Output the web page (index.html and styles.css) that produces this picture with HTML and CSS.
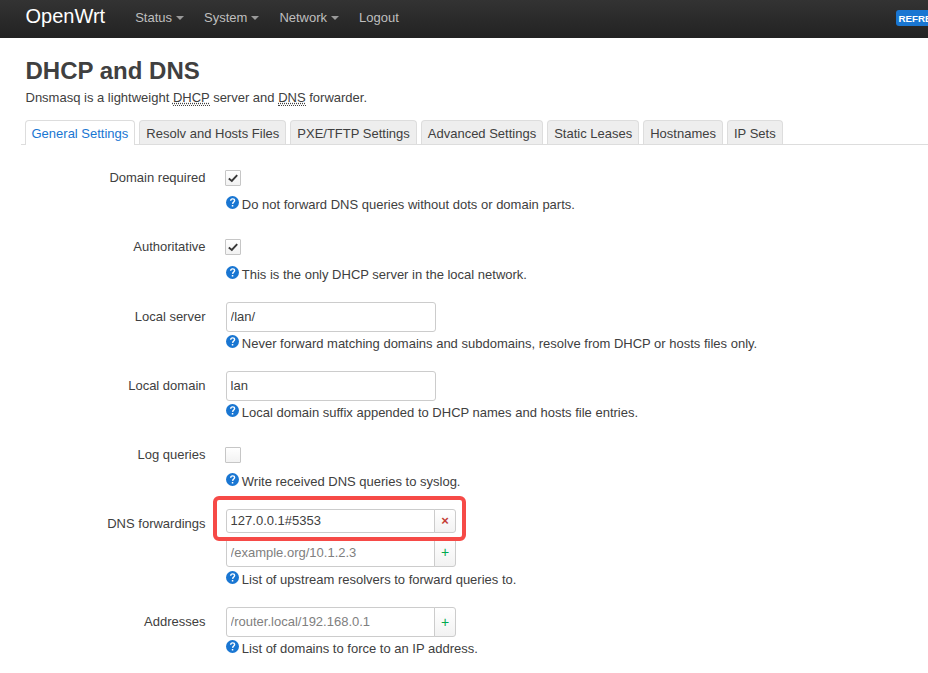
FILE: index.html
```html
<!DOCTYPE html>
<html lang="en">
<head>
<meta charset="utf-8">
<title>OpenWrt - DHCP and DNS</title>
<link rel="stylesheet" href="styles.css">
</head>
<body>
<svg class="defs" width="0" height="0" aria-hidden="true">
  <symbol id="help" viewBox="0 0 13 13"><circle cx="6.5" cy="6.5" r="6.5" fill="#1976d2"/><path d="M4.7 4.7C4.7 2.2 8.6 2.3 8.6 4.6C8.6 6 6.8 6.1 6.6 7.8" fill="none" stroke="#fff" stroke-width="1.4"/><rect x="5.8" y="9" width="1.5" height="1.5" fill="#fff"/></symbol>
  <symbol id="check" viewBox="0 0 10 9"><path d="M.8 4.6L3.8 7L9.2 1.2" fill="none" stroke="#383838" stroke-width="1.9"/></symbol>
</svg>
<header class="topbar">
  <a class="brand">OpenWrt</a>
  <nav class="menu">
    <a class="drop">Status</a>
    <a class="drop">System</a>
    <a class="drop">Network</a>
    <a>Logout</a>
  </nav>
  <span class="badge">REFRESHING</span>
</header>
<main>
  <h2>DHCP and DNS</h2>
  <p class="intro">Dnsmasq is a lightweight <abbr>DHCP</abbr> server and <abbr>DNS</abbr> forwarder.</p>
  <ul class="tabs">
    <li class="active">General Settings</li>
    <li>Resolv and Hosts Files</li>
    <li>PXE/TFTP Settings</li>
    <li>Advanced Settings</li>
    <li>Static Leases</li>
    <li>Hostnames</li>
    <li>IP Sets</li>
  </ul>
  <section class="form">
    <div class="row">
      <label>Domain required</label>
      <div class="field">
        <div class="checkline"><span class="checkbox"><svg width="10" height="9"><use href="#check"/></svg></span></div>
        <div class="help"><svg width="13" height="13"><use href="#help"/></svg><span>Do not forward DNS queries without dots or domain parts.</span></div>
      </div>
    </div>
    <div class="row authoritative">
      <label>Authoritative</label>
      <div class="field">
        <div class="checkline"><span class="checkbox"><svg width="10" height="9"><use href="#check"/></svg></span></div>
        <div class="help"><svg width="13" height="13"><use href="#help"/></svg><span>This is the only DHCP server in the local network.</span></div>
      </div>
    </div>
    <div class="row">
      <label>Local server</label>
      <div class="field">
        <input type="text" value="/lan/">
        <div class="help"><svg width="13" height="13"><use href="#help"/></svg><span>Never forward matching domains and subdomains, resolve from DHCP or hosts files only.</span></div>
      </div>
    </div>
    <div class="row">
      <label>Local domain</label>
      <div class="field">
        <input type="text" value="lan">
        <div class="help"><svg width="13" height="13"><use href="#help"/></svg><span>Local domain suffix appended to DHCP names and hosts file entries.</span></div>
      </div>
    </div>
    <div class="row">
      <label>Log queries</label>
      <div class="field">
        <div class="checkline"><span class="checkbox"></span></div>
        <div class="help"><svg width="13" height="13"><use href="#help"/></svg><span>Write received DNS queries to syslog.</span></div>
      </div>
    </div>
    <div class="row forwardings">
      <label>DNS forwardings</label>
      <div class="field">
        <div class="item"><span class="value">127.0.0.1#5353</span><span class="btn remove">×</span><span class="marker"></span></div>
        <div class="add"><input type="text" placeholder="/example.org/10.1.2.3"><span class="btn">+</span></div>
        <div class="help"><svg width="13" height="13"><use href="#help"/></svg><span>List of upstream resolvers to forward queries to.</span></div>
      </div>
    </div>
    <div class="row">
      <label>Addresses</label>
      <div class="field">
        <div class="add"><input type="text" placeholder="/router.local/192.168.0.1"><span class="btn">+</span></div>
        <div class="help"><svg width="13" height="13"><use href="#help"/></svg><span>List of domains to force to an IP address.</span></div>
      </div>
    </div>
  </section>
</main>
</body>
</html>
```
FILE: styles.css
```css
* { box-sizing: border-box; }
html, body { overflow: hidden; }
body {
  margin: 0;
  height: 673px;
  background: #fff;
  color: #404040;
  font: 13px/18px "Liberation Sans", Arial, sans-serif;
}
.defs { display: block; height: 0; }
.topbar {
  display: flex;
  height: 38px;
  padding-left: 25.5px;
  background: linear-gradient(#333, #222);
  overflow: hidden;
  white-space: nowrap;
}
.brand { width: 109.7px; flex: none; color: #fff; font-size: 20px; line-height: 32px; }
.menu { display: flex; flex: none; width: 760.8px; gap: 20px; color: #bfbfbf; line-height: 35px; }
.drop::after {
  content: "";
  display: inline-block;
  margin-left: 4px;
  vertical-align: 2px;
  border: 4px solid transparent;
  border-top-color: #999;
  border-bottom: 0;
}
.badge {
  flex: none;
  height: 16px;
  margin-top: 10px;
  padding: 1px 2.5px;
  border-radius: 3px;
  background: #1976d2;
  color: #fff;
  font-size: 9.75px;
  font-weight: bold;
  line-height: 16px;
}
main { padding-top: 15px; }
h2 { margin: 0 0 0 25.5px; font-size: 24px; line-height: 36px; }
.intro { margin: 0 0 13px 25.5px; line-height: 18px; }
abbr {
  border-bottom: 1px dotted #404040;
  text-decoration: underline dotted;
}
.tabs {
  display: flex;
  gap: 4px;
  height: 25px;
  margin: 0 0 18px 21px;
  padding: 0 0 0 3.5px;
  border-bottom: 1px solid #ddd;
  list-style: none;
  white-space: nowrap;
}
.tabs li {
  height: 24px;
  padding: 0 6px;
  border: 1px solid #ddd;
  border-bottom: 0;
  border-radius: 4px 4px 0 0;
  background: #eee;
  line-height: 25px;
}
.tabs .active { height: 25px; background: #fff; color: #1976d2; }
.row { display: flex; height: 69px; }
.forwardings { height: 98px; }
.forwardings .help { padding-top: 4px; }
.authoritative { height: 70px; }
.row label { width: 205.5px; margin-right: 20.5px; text-align: right; line-height: 29px; }
.checkline { height: 30px; padding-top: 7px; }
.authoritative .checkline { height: 31px; }
.checkbox {
  display: flex;
  align-items: center;
  justify-content: center;
  width: 16px;
  height: 16px;
  margin-left: -1px;
  border: 1px solid #c6c6c6;
  border-radius: 1px;
  background: linear-gradient(#fff, #f2f2f2);
}
.help { display: flex; gap: 2.8px; padding-top: 3px; line-height: 18px; white-space: nowrap; }
input {
  display: block;
  width: 210px;
  height: 30px;
  margin: 0;
  padding: 0 3.6px 2px;
  border: 1px solid #ccc;
  border-radius: 3px;
  background: #fff;
  color: #404040;
  font: inherit;
}
input::placeholder { color: #808080; opacity: 1; }
.item, .add { display: flex; width: 230px; }
.add input { width: 209px; border-radius: 3px 0 0 3px; }
.forwardings .add input { padding-bottom: 0; }
.item { position: relative; height: 24px; margin-bottom: 4px; }
.value {
  width: 209px;
  padding-left: 3.6px;
  border: 1px solid #ccc;
  border-radius: 3px 0 0 3px;
  line-height: 22px;
}
.btn {
  flex: 1;
  margin-left: -1px;
  border: 1px solid #ccc;
  border-radius: 0 3px 3px 0;
  background: linear-gradient(#fff, #f2f2f2);
  color: #00a94f;
  font-size: 14px;
  line-height: 28px;
  text-align: center;
}
.remove { color: #c43c35; font-size: 13px; font-weight: bold; line-height: 22px; }
.marker {
  position: absolute;
  left: -13px;
  top: -13px;
  z-index: 1;
  width: 253px;
  height: 45px;
  border: 4px solid #f64a47;
  border-radius: 6px;
}
```
